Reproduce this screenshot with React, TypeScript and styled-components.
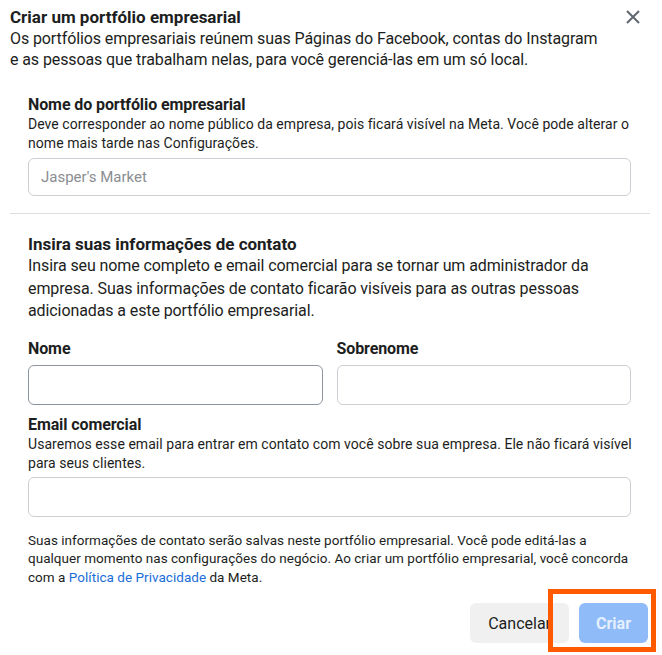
import React from 'react';
import styled, { createGlobalStyle } from 'styled-components';

const GlobalStyle = createGlobalStyle`
  body {
    margin: 0;
    background: #fff;
    font-family: Roboto, "Liberation Sans", Arial, sans-serif;
    color: #1c1e21;
  }
`;

const Dialog = styled.div`
  position: relative;
  width: 662px;
  height: 655px;
  box-sizing: border-box;
  padding: 6px 12px 0 10px;
  overflow: hidden;
`;

const Header = styled.div`
  display: flex;
  justify-content: space-between;
  align-items: flex-start;
`;

const Title = styled.h1`
  margin: 0;
  font-size: 17px;
  line-height: 22px;
  font-weight: 700;
`;

const CloseButton = styled.button`
  border: none;
  background: none;
  padding: 0;
  margin: 3px 9px 0 0;
  width: 16px;
  height: 16px;
  cursor: pointer;
  display: flex;
`;

const Lead = styled.p`
  margin: 0;
  font-size: 16px;
  line-height: 21px;
  letter-spacing: -0.1px;
`;

const Section = styled.div<{ $top: number }>`
  margin-top: ${p => p.$top}px;
  padding: 0 19px 0 18px;
`;

const Label = styled.div`
  font-size: 16px;
  line-height: 20px;
  font-weight: 700;
  letter-spacing: -0.1px;
`;

const Help = styled.p`
  margin: 0;
  font-size: 14px;
  line-height: 19px;
  letter-spacing: 0.05px;
  white-space: nowrap;
`;

const InputWrap = styled.div<{ $top: number }>`
  margin-top: ${p => p.$top}px;
`;

const Input = styled.input<{ $tall?: boolean; $focus?: boolean }>`
  display: block;
  box-sizing: border-box;
  width: 100%;
  height: ${p => (p.$tall ? 40 : 38)}px;
  border: 1px solid ${p => (p.$focus ? '#8d949e' : '#ccd0d5')};
  border-radius: 6px;
  padding: 0 12px;
  font-family: inherit;
  font-size: 15px;
  color: #1c1e21;
  outline: none;
  &::placeholder {
    color: #8a8d91;
  }
`;

const Divider = styled.hr`
  border: none;
  border-top: 1px solid #dadde1;
  margin: 17px 0 0;
`;

const SubTitle = styled.h2`
  margin: 0;
  font-size: 17px;
  line-height: 22px;
  font-weight: 700;
`;

const Body = styled.p`
  margin: 0;
  font-size: 16px;
  line-height: 22.5px;
  letter-spacing: -0.1px;
`;

const NameRow = styled.div`
  display: grid;
  grid-template-columns: 1fr 1fr;
  column-gap: 14px;
  margin-top: 16px;
`;

const Field = styled.div`
  display: flex;
  flex-direction: column;
  gap: 6px;
`;

const Legal = styled.p`
  margin: 14px 0 0;
  font-size: 13.5px;
  line-height: 18.5px;
  letter-spacing: 0.03px;
  white-space: nowrap;
`;

const Link = styled.a`
  color: #1a6ed8;
  text-decoration: none;
`;

const Footer = styled.div`
  display: flex;
  justify-content: flex-end;
  gap: 10px;
  margin-top: 17px;
  padding-right: 2px;
`;

const Button = styled.button<{ $primary?: boolean }>`
  height: 40px;
  border: none;
  border-radius: 6px;
  font-family: inherit;
  font-size: 16px;
  padding: 0 ${p => (p.$primary ? 17 : 18)}px;
  background: ${p => (p.$primary ? '#8fbbf9' : '#f0f0f0')};
  color: ${p => (p.$primary ? '#e6f0fd' : '#1c1e21')};
  font-weight: ${p => (p.$primary ? 700 : 400)};
  cursor: pointer;
`;

const Highlight = styled.div`
  position: absolute;
  left: 548px;
  top: 589px;
  width: 108px;
  height: 63px;
  box-sizing: border-box;
  border: 5px solid #ff5a00;
  pointer-events: none;
`;

export default function App() {
  return (
    <>
      <GlobalStyle />
      <Dialog>
        <Header>
          <Title>Criar um portfólio empresarial</Title>
          <CloseButton aria-label="Fechar">
            <svg width="16" height="16" viewBox="0 0 16 16">
              <path d="M2 2 L14 14 M14 2 L2 14" stroke="#606770" strokeWidth="2" />
            </svg>
          </CloseButton>
        </Header>
        <Lead>
          Os portfólios empresariais reúnem suas Páginas do Facebook, contas do Instagram
          <br />e as pessoas que trabalham nelas, para você gerenciá-las em um só local.
        </Lead>

        <Section $top={25}>
          <Label>Nome do portfólio empresarial</Label>
          <Help>
            Deve corresponder ao nome público da empresa, pois ficará visível na Meta. Você pode alterar o
            <br />nome mais tarde nas Configurações.
          </Help>
          <InputWrap $top={5}>
            <Input placeholder="Jasper's Market" />
          </InputWrap>
        </Section>

        <Divider />

        <Section $top={19}>
          <SubTitle>Insira suas informações de contato</SubTitle>
          <Body>
            Insira seu nome completo e email comercial para se tornar um administrador da
            <br />empresa. Suas informações de contato ficarão visíveis para as outras pessoas
            <br />adicionadas a este portfólio empresarial.
          </Body>

          <NameRow>
            <Field>
              <Label>Nome</Label>
              <Input $tall $focus />
            </Field>
            <Field>
              <Label>Sobrenome</Label>
              <Input $tall />
            </Field>
          </NameRow>

          <InputWrap $top={10}>
            <Label>Email comercial</Label>
            <Help>
              Usaremos esse email para entrar em contato com você sobre sua empresa. Ele não ficará visível
              <br />para seus clientes.
            </Help>
            <InputWrap $top={4}>
              <Input $tall />
            </InputWrap>
          </InputWrap>

          <Legal>
            Suas informações de contato serão salvas neste portfólio empresarial. Você pode editá-las a
            <br />qualquer momento nas configurações do negócio. Ao criar um portfólio empresarial, você concorda
            <br />com a <Link href="#">Política de Privacidade</Link> da Meta.
          </Legal>
        </Section>

        <Footer>
          <Button>Cancelar</Button>
          <Button $primary>Criar</Button>
        </Footer>
        <Highlight />
      </Dialog>
    </>
  );
}
